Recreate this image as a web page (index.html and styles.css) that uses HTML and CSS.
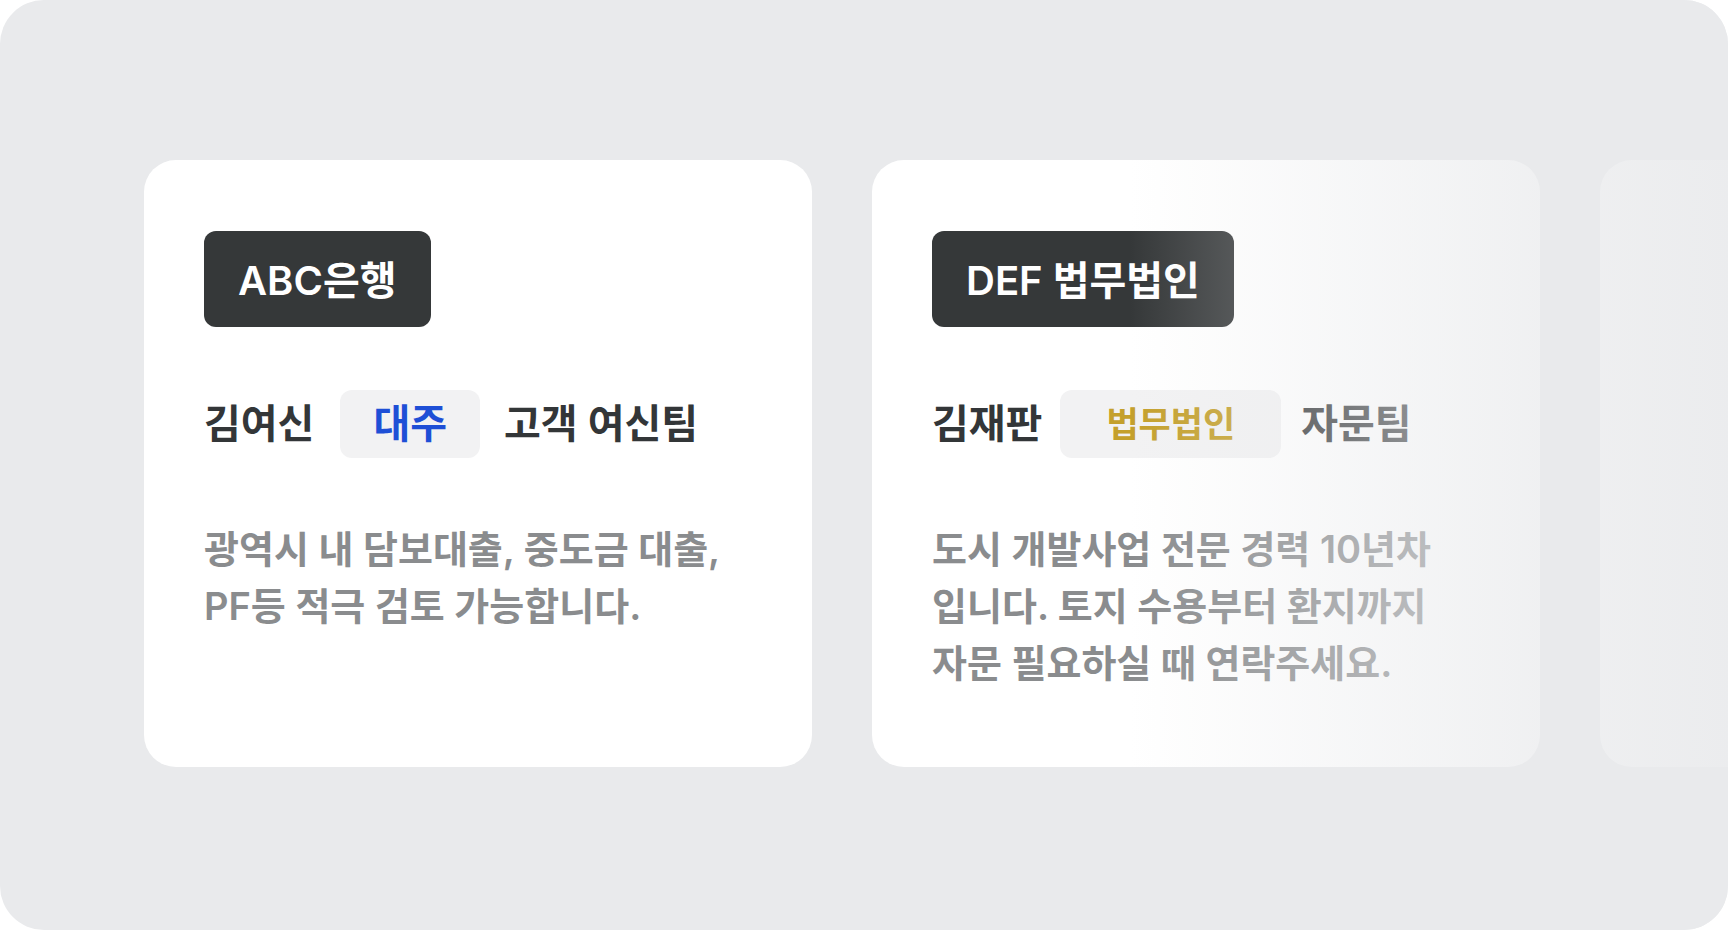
FILE: index.html
```html
<!DOCTYPE html>
<html lang="ko">
<head>
<meta charset="utf-8">
<title>Partners</title>
<link rel="stylesheet" href="styles.css">
</head>
<body>
<div class="stage">
  <div class="track">
    <article class="card">
      <div class="badge">ABC은행</div>
      <div class="person">
        <span class="name">김여신</span>
        <span class="chip chip-blue">대주</span>
        <span class="team">고객 여신팀</span>
      </div>
      <p class="desc">광역시 내 담보대출, 중도금 대출,<br>PF등 적극 검토 가능합니다.</p>
    </article>
    <article class="card">
      <div class="badge">DEF 법무법인</div>
      <div class="person">
        <span class="name">김재판</span>
        <span class="chip chip-gold">법무법인</span>
        <span class="team team-faded">자문팀</span>
      </div>
      <p class="desc">도시 개발사업 전문 경력 10년차<br>입니다. 토지 수용부터 환지까지<br>자문 필요하실 때 연락주세요.</p>
    </article>
    <article class="card"></article>
  </div>
  <div class="fade"></div>
</div>
</body>
</html>
```

FILE: styles.css
```css
* { box-sizing: border-box; }
html, body { margin: 0; padding: 0; background: #ffffff; }
body { font-family: Inter, "Noto Sans CJK KR", "Noto Sans", sans-serif; }

.stage {
  position: relative;
  width: 1728px;
  height: 930px;
  background: #e9eaec;
  border-radius: 44px;
  overflow: hidden;
}

.track {
  display: flex;
  gap: 60px;
  padding: 160px 0 0 144px;
}

.card {
  flex: 0 0 668px;
  height: 607px;
  background: #ffffff;
  border-radius: 32px;
  padding: 71px 60px 0;
}

.badge {
  display: inline-flex;
  align-items: center;
  height: 96px;
  padding: 0 34px 2px;
  border-radius: 12px;
  background: #353839;
  color: #ffffff;
  font-size: 40px;
  font-weight: 600;
}

.person {
  display: flex;
  align-items: center;
  gap: 26px;
  margin-top: 63px;
  font-size: 40px;
  font-weight: 600;
  color: #333638;
}

.name, .team { padding-bottom: 6px; }

.chip {
  display: flex;
  align-items: center;
  height: 68px;
  padding: 0 33px 6px;
  border-radius: 12px;
  background: #f2f2f3;
}
.chip-blue { color: #1e4fd6; }
.chip-gold {
  color: #c4a02c;
  font-size: 35px;
  padding: 0 46px 6px;
  margin-left: -8px;
}
.team { margin-left: -2px; }
.team-faded { margin-left: -6px; }

.desc {
  margin: 63px 0 0;
  font-size: 38px;
  line-height: 57px;
  font-weight: 600;
  color: #8a8c8e;
}

.fade {
  position: absolute;
  top: 0;
  bottom: 0;
  left: 1130px;
  right: 0;
  background: linear-gradient(to right,
    rgba(233, 234, 236, 0) 0%,
    rgba(233, 234, 236, 0.7) 68%,
    rgba(233, 234, 236, 0.9) 100%);
  pointer-events: none;
}
```
